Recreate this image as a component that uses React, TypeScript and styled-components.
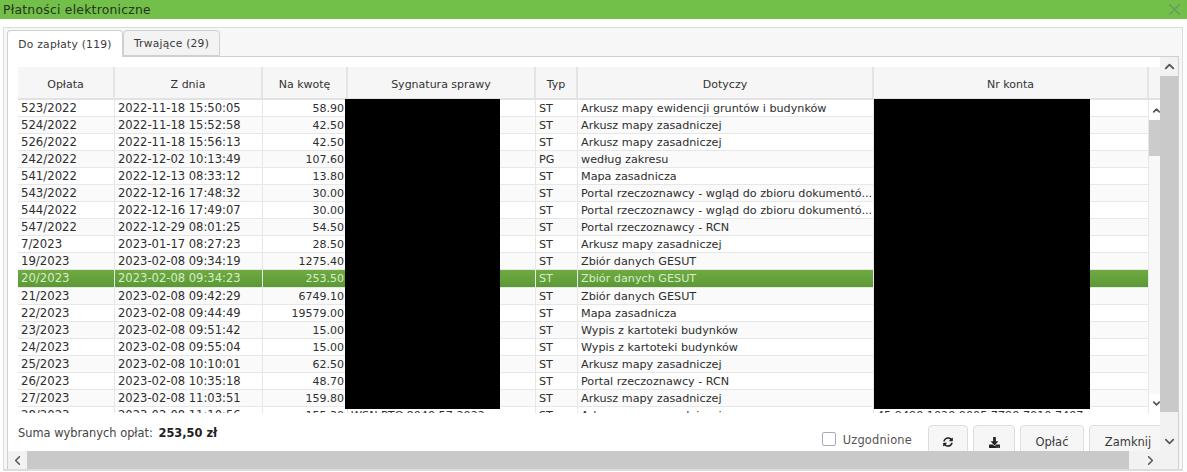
import React, { FC } from "react";
import styled, { createGlobalStyle } from "styled-components";
import { X, ChevronUp, ChevronDown, ChevronLeft, ChevronRight } from "lucide-react";
import { FaDownload, FaSyncAlt } from "react-icons/fa";

const GRID = "97px 148px 85px 188px 42px 296px 275px";

const GlobalStyle = createGlobalStyle`
  html, body {
    margin: 0;
    padding: 0;
    background: #fff;
    font-family: "DejaVu Sans", "Liberation Sans", sans-serif;
    color: #333;
  }
`;

const Page = styled.div`
  width: 1187px;
  height: 472px;
  overflow: hidden;
  display: flex;
  flex-direction: column;
`;

const TitleBar = styled.div`
  height: 19px;
  flex: none;
  background: #72bf4a;
  display: flex;
  align-items: center;
  justify-content: space-between;
  padding: 0 3px 0 3px;
  font-size: 12.35px;
  color: #24351c;
  letter-spacing: 0.25px;
  svg {
    color: #6a9a60;
    flex: none;
  }
`;

const Frame = styled.div`
  flex: 1;
  margin: 8px 4px 1px 3px;
  min-height: 0;
  display: flex;
  flex-direction: column;
  background: #f7f7f7;
  border: 1px solid #dcdcdc;
  border-bottom-width: 2px;
  padding: 2px 3px 0 3px;
`;

const TabRow = styled.div`
  display: flex;
  height: 26px;
  flex: none;
  position: relative;
  z-index: 1;
`;

const Tab = styled.div<{ $active?: boolean }>`
  display: flex;
  align-items: center;
  justify-content: center;
  width: ${(props) => (props.$active ? "116px" : "97px")};
  height: ${(props) => (props.$active ? "27px" : "26px")};
  box-sizing: border-box;
  font-size: 10.7px;
  letter-spacing: 0.25px;
  color: #3a3a3a;
  background: ${(props) => (props.$active ? "#fff" : "#f3f3f3")};
  border: 1px solid #cfcfcf;
  border-bottom: ${(props) => (props.$active ? "none" : "1px solid #cfcfcf")};
  border-radius: 4px 4px 0 0;
`;

const Pane = styled.div`
  flex: 1;
  min-height: 0;
  display: flex;
  flex-direction: column;
  background: #f5f5f5;
  border: 1px solid #cfcfcf;
  border-bottom: none;
`;

const PaneBody = styled.div`
  flex: 1;
  min-height: 0;
  display: flex;
`;

const Content = styled.div`
  width: 1152px;
  flex: none;
  overflow: hidden;
  background: #fff;
  padding: 10px 0 0 10px;
  box-sizing: border-box;
  display: flex;
  flex-direction: column;
`;

const TableArea = styled.div`
  position: relative;
  display: flex;
  height: 346px;
  flex: none;
  overflow: hidden;
`;

const Table = styled.div`
  width: 1131px;
  flex: none;
  font-size: 11.2px;
`;

const HeaderRow = styled.div`
  display: grid;
  grid-template-columns: ${GRID};
  height: 33px;
  background: #f6f6f6;
  border-bottom: 2px solid #e2e2e2;
  box-sizing: border-box;
`;

const HeaderCell = styled.div`
  display: flex;
  align-items: center;
  justify-content: center;
  padding-top: 3px;
  font-size: 11px;
  color: #333;
  border-right: 2px solid #e4e4e4;
  box-sizing: border-box;
`;

const Row = styled.div<{ $selected?: boolean; $odd?: boolean }>`
  display: grid;
  grid-template-columns: ${GRID};
  height: 17.05px;
  box-sizing: border-box;
  color: ${(props) => (props.$selected ? "#d6edc8" : "#2e2e2e")};
  background: ${(props) =>
    props.$selected
      ? "linear-gradient(#6faa42, #5b9936)"
      : props.$odd
      ? "#fafafa"
      : "#fff"};
  border-bottom: 1px solid #e7e7e7;
`;

const Cell = styled.div<{ $right?: boolean; $size?: number }>`
  padding: 0 3px;
  line-height: 17px;
  white-space: nowrap;
  overflow: hidden;
  font-size: ${(props) => props.$size ?? 11.2}px;
  text-align: ${(props) => (props.$right ? "right" : "left")};
  border-right: 1px solid #e7e7e7;
  box-sizing: border-box;
`;

const Redaction = styled.div<{ $left: number; $width: number }>`
  position: absolute;
  top: 32px;
  left: ${(props) => props.$left}px;
  width: ${(props) => props.$width}px;
  height: 310px;
  background: #000;
`;

const InnerBar = styled.div`
  width: 11px;
  flex: none;
  display: flex;
  flex-direction: column;
  align-items: center;
  background: #f8f8f8;
  color: #555;
`;

const InnerCap = styled.div`
  height: 33px;
  width: 100%;
  flex: none;
  background: #f6f6f6;
  border-bottom: 2px solid #e2e2e2;
  box-sizing: border-box;
`;

const InnerArrow = styled.div<{ $height: number }>`
  height: ${(props) => props.$height}px;
  width: 100%;
  flex: none;
  display: flex;
  align-items: center;
  justify-content: flex-end;
  overflow: hidden;
  background: #fff;
  svg {
    flex: none;
    margin-right: -2px;
  }
`;

const InnerThumb = styled.div`
  height: 36px;
  width: 100%;
  flex: none;
  background: #cbcbcb;
`;

const InnerSpacer = styled.div`
  flex: 1;
`;

const Footer = styled.div`
  flex: 1;
  display: flex;
  align-items: flex-start;
  justify-content: space-between;
  overflow: hidden;
  font-size: 11.4px;
`;

const Sum = styled.div`
  padding-top: 13px;
  color: #444;
  b {
    color: #222;
    margin-left: 2px;
  }
`;

const Actions = styled.div`
  display: flex;
  align-items: flex-start;
  gap: 5px;
  padding-top: 12px;
  margin-right: -7px;
`;

const CheckLabel = styled.label`
  display: flex;
  align-items: center;
  gap: 7px;
  height: 16px;
  margin: 7px 11px 0 0;
  color: #555;
  letter-spacing: 0.2px;
`;

const CheckBox = styled.span`
  width: 12px;
  height: 12px;
  margin-top: -3px;
  border: 1px solid #a9a9b8;
  border-radius: 2px;
  background: #fff;
  display: block;
`;

const Button = styled.div<{ $width: number }>`
  width: ${(props) => props.$width}px;
  height: 34px;
  box-sizing: border-box;
  flex: none;
  display: flex;
  align-items: center;
  justify-content: center;
  background: #f6f6f6;
  border: 1px solid #dedede;
  border-radius: 4px;
  color: #3a3a3a;
  font-size: 11.5px;
`;

const VBar = styled.div`
  width: 18px;
  flex: none;
  background: #f2f2f2;
  display: flex;
  flex-direction: column;
  align-items: center;
  color: #555;
`;

const VArrow = styled.div<{ $height: number; $offset?: number }>`
  height: ${(props) => props.$height}px;
  box-sizing: border-box;
  padding-top: ${(props) => props.$offset ?? 0}px;
  flex: none;
  display: flex;
  align-items: center;
  justify-content: center;
`;

const VThumb = styled.div`
  height: 336px;
  width: 100%;
  flex: none;
  background: #c9c9c9;
`;

const HBar = styled.div`
  height: 18px;
  flex: none;
  display: flex;
  background: #f2f2f2;
  color: #555;
`;

const HArrow = styled.div<{ $width: number; $inset?: number }>`
  width: ${(props) => props.$width}px;
  box-sizing: border-box;
  padding-right: ${(props) => props.$inset ?? 0}px;
  flex: none;
  display: flex;
  align-items: center;
  justify-content: center;
`;

const HThumb = styled.div`
  flex: 1;
  background: #c9c9c9;
`;

type Payment = {
  id: string;
  date: string;
  amount: string;
  type: string;
  title: string;
  signature?: string;
  account?: string;
};

const PORTAL_DOCS = "Portal rzeczoznawcy - wgląd do zbioru dokumentó...";

const payments: Payment[] = [
  { id: "523/2022", date: "2022-11-18 15:50:05", amount: "58.90", type: "ST", title: "Arkusz mapy ewidencji gruntów i budynków" },
  { id: "524/2022", date: "2022-11-18 15:52:58", amount: "42.50", type: "ST", title: "Arkusz mapy zasadniczej" },
  { id: "526/2022", date: "2022-11-18 15:56:13", amount: "42.50", type: "ST", title: "Arkusz mapy zasadniczej" },
  { id: "242/2022", date: "2022-12-02 10:13:49", amount: "107.60", type: "PG", title: "według zakresu" },
  { id: "541/2022", date: "2022-12-13 08:33:12", amount: "13.80", type: "ST", title: "Mapa zasadnicza" },
  { id: "543/2022", date: "2022-12-16 17:48:32", amount: "30.00", type: "ST", title: PORTAL_DOCS },
  { id: "544/2022", date: "2022-12-16 17:49:07", amount: "30.00", type: "ST", title: PORTAL_DOCS },
  { id: "547/2022", date: "2022-12-29 08:01:25", amount: "54.50", type: "ST", title: "Portal rzeczoznawcy - RCN" },
  { id: "7/2023", date: "2023-01-17 08:27:23", amount: "28.50", type: "ST", title: "Arkusz mapy zasadniczej" },
  { id: "19/2023", date: "2023-02-08 09:34:19", amount: "1275.40", type: "ST", title: "Zbiór danych GESUT" },
  { id: "20/2023", date: "2023-02-08 09:34:23", amount: "253.50", type: "ST", title: "Zbiór danych GESUT" },
  { id: "21/2023", date: "2023-02-08 09:42:29", amount: "6749.10", type: "ST", title: "Zbiór danych GESUT" },
  { id: "22/2023", date: "2023-02-08 09:44:49", amount: "19579.00", type: "ST", title: "Mapa zasadnicza" },
  { id: "23/2023", date: "2023-02-08 09:51:42", amount: "15.00", type: "ST", title: "Wypis z kartoteki budynków" },
  { id: "24/2023", date: "2023-02-08 09:55:04", amount: "15.00", type: "ST", title: "Wypis z kartoteki budynków" },
  { id: "25/2023", date: "2023-02-08 10:10:01", amount: "62.50", type: "ST", title: "Arkusz mapy zasadniczej" },
  { id: "26/2023", date: "2023-02-08 10:35:18", amount: "48.70", type: "ST", title: "Portal rzeczoznawcy - RCN" },
  { id: "27/2023", date: "2023-02-08 11:03:51", amount: "159.80", type: "ST", title: "Arkusz mapy zasadniczej" },
  { id: "28/2023", date: "2023-02-08 11:10:56", amount: "155.30", type: "ST", title: "Arkusz mapy zasadniczej", signature: "WSN.PTO.8040.57.2022", account: "45 9490 1020 0005 7790 7010 7407" },
];

const columns = ["Opłata", "Z dnia", "Na kwotę", "Sygnatura sprawy", "Typ", "Dotyczy", "Nr konta"];

const App: FC = () => (
  <Page>
    <GlobalStyle />
    <TitleBar>
      Płatności elektroniczne
      <X size={19} strokeWidth={1.7} />
    </TitleBar>
    <Frame>
      <TabRow>
        <Tab $active>Do zapłaty (119)</Tab>
        <Tab>Trwające (29)</Tab>
      </TabRow>
      <Pane>
        <PaneBody>
          <Content>
            <TableArea>
              <Table>
                <HeaderRow>
                  {columns.map((name) => (
                    <HeaderCell key={name}>{name}</HeaderCell>
                  ))}
                </HeaderRow>
                {payments.map((p, i) => (
                  <Row key={p.id} $odd={i % 2 === 1} $selected={p.id === "20/2023"}>
                    <Cell $size={11.7}>{p.id}</Cell>
                    <Cell $size={11.55}>{p.date}</Cell>
                    <Cell $right $size={11}>{p.amount}</Cell>
                    <Cell>{p.signature}</Cell>
                    <Cell>{p.type}</Cell>
                    <Cell>{p.title}</Cell>
                    <Cell>{p.account}</Cell>
                  </Row>
                ))}
              </Table>
              <InnerBar>
                <InnerCap />
                <InnerArrow $height={20}>
                  <ChevronUp size={11} strokeWidth={3.5} />
                </InnerArrow>
                <InnerThumb />
                <InnerSpacer />
                <InnerArrow $height={19}>
                  <ChevronDown size={11} strokeWidth={3.5} />
                </InnerArrow>
              </InnerBar>
              <Redaction $left={327} $width={155} />
              <Redaction $left={856} $width={216} />
            </TableArea>
            <Footer>
              <Sum>
                Suma wybranych opłat: <b>253,50 zł</b>
              </Sum>
              <Actions>
                <CheckLabel>
                  <CheckBox />
                  Uzgodnione
                </CheckLabel>
                <Button $width={40}>
                  <FaSyncAlt size={10} color="#222" />
                </Button>
                <Button $width={42}>
                  <FaDownload size={11} color="#222" />
                </Button>
                <Button $width={64}>Opłać</Button>
                <Button $width={78}>Zamknij</Button>
              </Actions>
            </Footer>
          </Content>
          <VBar>
            <VArrow $height={19}>
              <ChevronUp size={15} strokeWidth={3} />
            </VArrow>
            <VThumb />
            <VArrow $height={39} $offset={20}>
              <ChevronDown size={15} strokeWidth={2.5} />
            </VArrow>
          </VBar>
        </PaneBody>
        <HBar>
          <HArrow $width={19}>
            <ChevronLeft size={15} strokeWidth={2.5} />
          </HArrow>
          <HThumb />
          <HArrow $width={49} $inset={7}>
            <ChevronRight size={15} strokeWidth={2.5} />
          </HArrow>
        </HBar>
      </Pane>
    </Frame>
  </Page>
);

export default App;
